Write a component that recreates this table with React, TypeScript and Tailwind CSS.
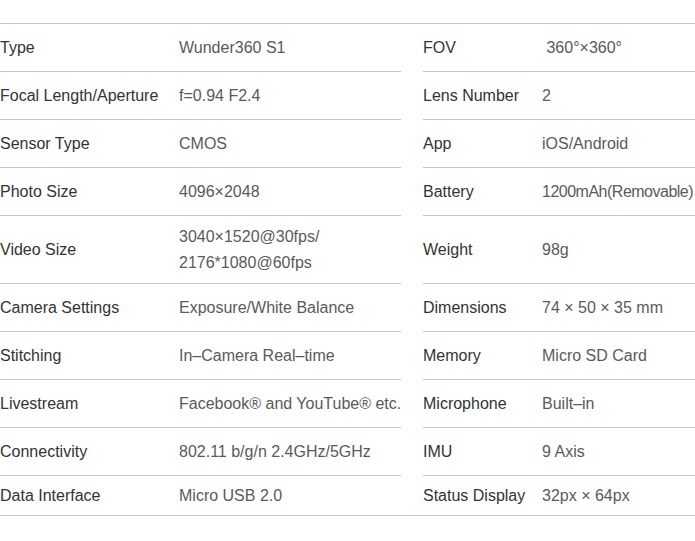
import React from 'react'

type Spec = { label: string; value: React.ReactNode; tall?: boolean }

const left: Spec[] = [
  { label: 'Type', value: 'Wunder360 S1' },
  { label: 'Focal Length/Aperture', value: 'f=0.94 F2.4' },
  { label: 'Sensor Type', value: 'CMOS' },
  { label: 'Photo Size', value: '4096×2048' },
  {
    label: 'Video Size',
    value: (
      <>
        3040×1520@30fps/
        <br />
        2176*1080@60fps
      </>
    ),
    tall: true,
  },
  { label: 'Camera Settings', value: 'Exposure/White Balance' },
  { label: 'Stitching', value: 'In–Camera Real–time' },
  { label: 'Livestream', value: 'Facebook® and YouTube® etc.' },
  { label: 'Connectivity', value: '802.11 b/g/n 2.4GHz/5GHz' },
  { label: 'Data Interface', value: 'Micro USB 2.0' },
]

const right: Spec[] = [
  { label: 'FOV', value: '\u00a0360°×360°' },
  { label: 'Lens Number', value: '2' },
  { label: 'App', value: 'iOS/Android' },
  { label: 'Battery', value: <span className="tracking-[-0.5px]">1200mAh(Removable)</span> },
  { label: 'Weight', value: '98g', tall: true },
  { label: 'Dimensions', value: '74 × 50 × 35 mm' },
  { label: 'Memory', value: 'Micro SD Card' },
  { label: 'Microphone', value: 'Built–in' },
  { label: 'IMU', value: '9 Axis' },
  { label: 'Status Display', value: '32px × 64px' },
]

function Column({ rows, labelWidth, className }: { rows: Spec[]; labelWidth: string; className: string }) {
  return (
    <div className={className}>
      {rows.map((r, i) => {
        const last = i === rows.length - 1
        return (
          <div
            key={r.label}
            className={`flex items-center ${r.tall ? 'h-[68px]' : last ? 'h-[39px]' : 'h-[48px]'} ${
              last ? '' : 'border-b border-[#c9c9c9]'
            }`}
          >
            <div className={`${labelWidth} shrink-0 text-[#333] whitespace-nowrap`}>{r.label}</div>
            <div className="text-[#5a5a5a] leading-[26px] whitespace-nowrap">{r.value}</div>
          </div>
        )
      })}
    </div>
  )
}

export default function App() {
  return (
    <div
      className="w-[695px] h-[541px] bg-white pt-[23px] overflow-hidden text-[16px]"
      style={{ fontFamily: '"Liberation Sans", Arial, sans-serif' }}
    >
      <div className="flex justify-between border-y border-[#c9c9c9]">
        <Column rows={left} labelWidth="w-[179px]" className="w-[401px]" />
        <Column rows={right} labelWidth="w-[119px]" className="w-[272px]" />
      </div>
    </div>
  )
}
